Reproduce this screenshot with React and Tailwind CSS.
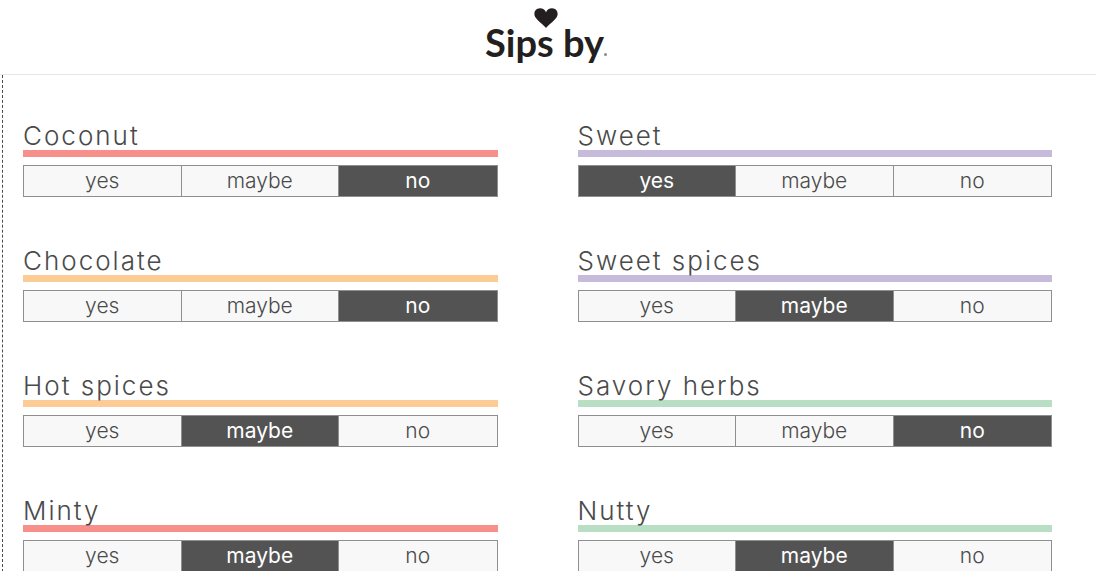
import React, { useState } from 'react';
import clsx from 'clsx';

const OPTIONS = ['yes', 'maybe', 'no'];

const FLAVORS = [
  { name: 'Coconut', bar: 'border-[#f78f8a]', answer: 'no' },
  { name: 'Sweet', bar: 'border-[#c7bbdc]', answer: 'yes' },
  { name: 'Chocolate', bar: 'border-[#fdcb96]', answer: 'no' },
  { name: 'Sweet spices', bar: 'border-[#c7bbdc]', answer: 'maybe' },
  { name: 'Hot spices', bar: 'border-[#fdcb96]', answer: 'maybe' },
  { name: 'Savory herbs', bar: 'border-[#b8dec3]', answer: 'no' },
  { name: 'Minty', bar: 'border-[#f78f8a]', answer: 'maybe' },
  { name: 'Nutty', bar: 'border-[#b8dec3]', answer: 'maybe' },
];

function Logo() {
  return (
    <a href="#" aria-label="Sips by" className="flex flex-col items-center text-[#231f20]">
      <svg viewBox="0 0 24 20" className="h-5 w-6" fill="currentColor" aria-hidden="true">
        <path d="M12 20C9.6 17.2 3.2 12.4 1.2 9.1C-0.8 5.6 0.9 0.3 6 0.3C8.8 0.3 11 1.9 12 4.3C13 1.9 15.2 0.3 18 0.3C23.1 0.3 24.8 5.6 22.8 9.1C20.8 12.4 14.4 17.2 12 20Z" />
      </svg>
      <span className="flex items-end font-['Lato'] text-[38px] leading-7 font-bold">
        Sips by
        <span className="size-[3px] rounded-full bg-[#8c8a8b]" />
      </span>
    </a>
  );
}

function FlavorQuestion({ flavor }) {
  const [answer, setAnswer] = useState(flavor.answer);

  return (
    <fieldset className="min-w-0">
      <legend className={clsx('w-full border-b-7 text-[26px] leading-7 font-light tracking-[2px]', flavor.bar)}>
        {flavor.name}
      </legend>
      <div className="mt-2 grid grid-cols-3 divide-x divide-[#8f8f8f] border border-[#8f8f8f]">
        {OPTIONS.map((option) => (
          <label
            key={option}
            className={clsx(
              'relative cursor-pointer text-center text-[21px] leading-[30px]',
              answer === option ? 'bg-[#535353] font-normal text-white' : 'bg-[#f8f8f8] font-light'
            )}
          >
            <input
              type="radio"
              name={flavor.name}
              value={option}
              checked={answer === option}
              onChange={() => setAnswer(option)}
              className="sr-only"
            />
            {option}
          </label>
        ))}
      </div>
    </fieldset>
  );
}

export default function App() {
  return (
    <div className="bg-white font-['Inter',sans-serif] text-[#4a4a4a]">
      <header className="flex justify-center border-b border-[#e6e6e6] pt-2 pr-1 pb-[18px]">
        <Logo />
      </header>
      <main className="ml-0.5 border-l border-dashed border-[#4a4a4a] pt-[47px] pr-11 pl-5">
        <form className="grid grid-cols-2 gap-x-20 gap-y-[50px]">
          {FLAVORS.map((flavor) => (
            <FlavorQuestion key={flavor.name} flavor={flavor} />
          ))}
        </form>
      </main>
    </div>
  );
}
